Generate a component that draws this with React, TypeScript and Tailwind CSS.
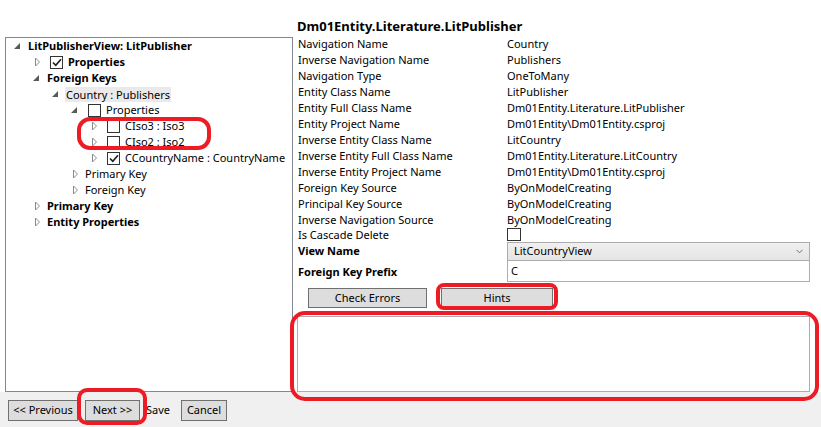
import React from "react";

const FONT = { fontFamily: '"Noto Sans", "Open Sans", sans-serif' };

function Expanded() {
  return (
    <svg width="6" height="6" viewBox="0 0 6 6" className="ml-[5px]">
      <polygon points="6,0 6,6 0,6" fill="#595959" />
    </svg>
  );
}

function Collapsed() {
  return (
    <svg width="6" height="10" viewBox="0 0 6 10" className="ml-[7px]">
      <polygon points="0.5,1 4.5,5 0.5,9" fill="#ffffff" stroke="#8a8a8a" strokeWidth="1" />
    </svg>
  );
}

function Check({ checked }: { checked?: boolean }) {
  return (
    <div className="ml-[3px] mr-[5px] w-[13px] h-[13px] border border-[#333333] bg-white flex items-center justify-center shrink-0">
      {checked && (
        <svg width="10" height="9" viewBox="0 0 10 9">
          <polyline points="1,4.5 3.8,7.3 9,1.2" fill="none" stroke="#212121" strokeWidth="1.7" />
        </svg>
      )}
    </div>
  );
}

type Node = {
  level: number;
  state: "exp" | "col" | "none";
  text: string;
  bold?: boolean;
  cb?: "on" | "off";
  sel?: boolean;
};

const nodes: Node[] = [
  { level: 0, state: "exp", text: "LitPublisherView: LitPublisher", bold: true },
  { level: 1, state: "col", text: "Properties", bold: true, cb: "on" },
  { level: 1, state: "exp", text: "Foreign Keys", bold: true },
  { level: 2, state: "exp", text: "Country : Publishers", sel: true },
  { level: 3, state: "exp", text: "Properties", cb: "off" },
  { level: 4, state: "col", text: "CIso3 : Iso3", cb: "off" },
  { level: 4, state: "col", text: "CIso2 : Iso2", cb: "off" },
  { level: 4, state: "col", text: "CCountryName : CountryName", cb: "on" },
  { level: 3, state: "col", text: "Primary Key" },
  { level: 3, state: "col", text: "Foreign Key" },
  { level: 1, state: "col", text: "Primary Key", bold: true },
  { level: 1, state: "col", text: "Entity Properties", bold: true },
];

const props: [string, string][] = [
  ["Navigation Name", "Country"],
  ["Inverse Navigation Name", "Publishers"],
  ["Navigation Type", "OneToMany"],
  ["Entity Class Name", "LitPublisher"],
  ["Entity Full Class Name", "Dm01Entity.Literature.LitPublisher"],
  ["Entity Project Name", "Dm01Entity\\Dm01Entity.csproj"],
  ["Inverse Entity Class Name", "LitCountry"],
  ["Inverse Entity Full Class Name", "Dm01Entity.Literature.LitCountry"],
  ["Inverse Entity Project Name", "Dm01Entity\\Dm01Entity.csproj"],
  ["Foreign Key Source", "ByOnModelCreating"],
  ["Principal Key Source", "ByOnModelCreating"],
  ["Inverse Navigation Source", "ByOnModelCreating"],
];

export default function App() {
  return (
    <div className="relative w-[821px] h-[427px] bg-white text-[11px] text-black overflow-hidden" style={FONT}>
      <div className="flex h-[392px]">
        {/* Left tree */}
        <div className="w-[293px] pl-[5px] pt-[37px] shrink-0">
          <div className="h-full border border-[#828790] bg-white">
            {nodes.map((n, i) => (
              <div
                key={i}
                className="flex items-center h-[16px] whitespace-nowrap"
                style={{ paddingLeft: 3 + n.level * 19 }}
              >
                <div className="w-[19px] h-[16px] flex items-center shrink-0">
                  {n.state === "exp" ? <Expanded /> : n.state === "col" ? <Collapsed /> : null}
                </div>
                {n.cb && <Check checked={n.cb === "on"} />}
                <span
                  className={
                    (n.bold ? "font-bold " : "") +
                    (n.sel ? "bg-[#eaeaea] -ml-[1px] px-[1px] h-[15px] leading-[15px]" : "leading-[16px]")
                  }
                >
                  {n.text}
                </span>
              </div>
            ))}
          </div>
        </div>

        {/* Right panel */}
        <div className="pl-[4px] w-[517px] flex flex-col shrink-0">
          <div className="h-[36px] pt-[16px] leading-[20px] text-[13px] font-bold whitespace-nowrap">
            Dm01Entity.Literature.LitPublisher
          </div>
          {props.map(([k, v]) => (
            <div key={k} className="flex h-[16px] leading-[16px] whitespace-nowrap">
              <div className="w-[210px] pl-[1px]">{k}</div>
              <div>{v}</div>
            </div>
          ))}
          <div className="flex h-[14px] whitespace-nowrap">
            <div className="w-[210px] pl-[1px] leading-[14px]">Is Cascade Delete</div>
            <div className="w-[14px] h-[14px] pt-0">
              <div className="w-[14px] h-[13px] border border-[#333333] bg-white" />
            </div>
          </div>
          <div className="flex h-[19px] items-center whitespace-nowrap">
            <div className="w-[210px] pl-[1px] font-bold">View Name</div>
            <div className="w-[303px] h-[19px] border border-[#acacac] bg-gradient-to-b from-[#f0f0f0] to-[#e5e5e5] flex items-center justify-between pl-[6px] pr-[6px]">
              <span>LitCountryView</span>
              <svg width="7" height="5" viewBox="0 0 7 5">
                <polyline points="0.5,0.8 3.5,3.8 6.5,0.8" fill="none" stroke="#707070" strokeWidth="1" />
              </svg>
            </div>
          </div>
          <div className="flex h-[21px] items-center whitespace-nowrap">
            <div className="w-[210px] pl-[1px] font-bold pt-[2px]">Foreign Key Prefix</div>
            <div className="w-[303px] h-[21px] border border-t-0 border-[#abadb3] bg-white flex items-center pl-[3px]">
              C
            </div>
          </div>
          <div className="flex mt-[6px] h-[20px] pl-[11px] gap-[14px]">
            <div className="w-[119px] h-[20px] border border-[#707070] bg-[#dddddd] flex items-center justify-center">
              Check Errors
            </div>
            <div className="w-[112px] h-[20px] border border-[#707070] bg-[#dddddd] flex items-center justify-center">
              Hints
            </div>
          </div>
          <div className="mt-[8px] w-[513px] h-[76px] border border-[#abadb3] bg-white" />
        </div>
      </div>

      {/* Bottom bar */}
      <div className="h-[35px] bg-[#f0f0f0] flex items-start pt-[8px] pl-[8px] whitespace-nowrap">
        <div className="w-[70px] h-[21px] border border-[#707070] bg-[#dddddd] flex items-center justify-center">
          {"<< Previous"}
        </div>
        <div className="ml-[7px] w-[55px] h-[21px] border border-[#707070] bg-[#dddddd] flex items-center justify-center">
          {"Next >>"}
        </div>
        <div className="ml-[6px] w-[30px] h-[21px] flex items-center">Save</div>
        <div className="ml-[5px] w-[46px] h-[21px] border border-[#707070] bg-[#dddddd] flex items-center justify-center">
          Cancel
        </div>
      </div>

      {/* Red annotations */}
      <div className="absolute left-[77px] top-[117px] w-[134px] h-[33px] border-4 border-[#ed1c24] rounded-[13px]" />
      <div className="absolute left-[436px] top-[283px] w-[122px] h-[27px] border-4 border-[#ed1c24] rounded-[8px]" />
      <div className="absolute left-[290px] top-[311px] w-[529px] h-[90px] border-4 border-[#ed1c24] rounded-[15px]" />
      <div className="absolute left-[77px] top-[388px] w-[70px] h-[37px] border-4 border-[#ed1c24] rounded-[10px]" />
    </div>
  );
}
